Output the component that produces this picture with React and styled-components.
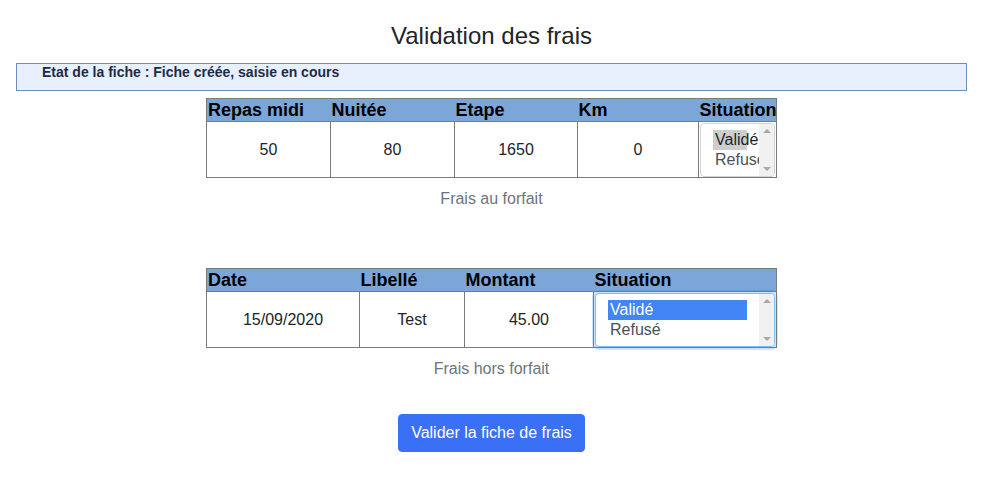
import React from 'react';
import styled, { createGlobalStyle, css } from 'styled-components';

const GlobalStyle = createGlobalStyle`
  body {
    margin: 0;
    background: #fff;
    color: #212529;
    font-family: "Liberation Sans", Arial, sans-serif;
    font-size: 16px;
  }
`;

const Page = styled.main`
  padding: 22px 16px 26px;
`;

const Title = styled.h1`
  margin: 0 0 12px;
  font-size: 24px;
  font-weight: 400;
  line-height: 1.2;
  text-align: center;
  color: #212529;
`;

const StatusBar = styled.div`
  height: 28px;
  box-sizing: border-box;
  padding: 0 25px;
  background: #e8f0fe;
  border: 1px solid #6c8ebf;
  font-size: 14px;
  font-weight: 700;
  line-height: 17px;
  color: #1e2b47;
`;

const Table = styled.table`
  margin: ${(props) => props.$top}px auto 0;
  border-collapse: collapse;
  border: 1px solid #7a7a7a;
  table-layout: fixed;
  width: 570px;
`;

const Caption = styled.caption`
  caption-side: bottom;
  padding-top: ${(props) => props.$gap}px;
  line-height: 24px;
  font-size: 16px;
  color: #6c757d;
  text-align: center;
`;

const HeadCell = styled.th`
  padding: 0 1px;
  height: 22px;
  line-height: 22px;
  background: #7da6d8;
  color: #000;
  font-size: 18px;
  font-weight: 700;
  text-align: left;
  white-space: nowrap;
  overflow: visible;
  border-bottom: 1px solid #7a7a7a;
`;

const Cell = styled.td`
  padding: 1px 1px 0;
  height: 54px;
  border: 1px solid #7a7a7a;
  text-align: center;
  vertical-align: middle;
  color: #212529;
`;

const ListBox = styled.div`
  display: flex;
  box-sizing: border-box;
  width: 100%;
  height: 54px;
  text-align: left;
  background: #fff;
  border: 1px solid ${(props) => (props.$focused ? '#80bdff' : '#ced4da')};
  border-radius: 4px;
  overflow: hidden;
  box-shadow: ${(props) =>
    props.$focused ? '0 0 0 3px rgba(0, 123, 255, 0.2)' : 'none'};
`;

const OptionList = styled.ul`
  flex: 1;
  min-width: 0;
  margin: 0;
  padding: 6px 12px;
  list-style: none;
  overflow: hidden;
`;

const Option = styled.li`
  padding: 0 2px;
  font-size: 16px;
  line-height: 20px;
  white-space: nowrap;
  color: #495057;

  ${(props) =>
    props.$selected &&
    css`
      background: ${props.$focused ? '#4285f4' : '#cecece'};
      color: ${props.$focused ? '#fff' : '#212529'};
    `}
`;

const ScrollTrack = styled.div`
  display: flex;
  flex-direction: column;
  justify-content: space-between;
  align-items: center;
  width: 15px;
  flex-shrink: 0;
  padding: 5px 0;
  box-sizing: border-box;
  background: #f1f1f1;
`;

const ScrollArrow = styled.span`
  width: 0;
  height: 0;
  border-left: 4px solid transparent;
  border-right: 4px solid transparent;
  ${(props) =>
    props.$dir === 'up'
      ? css`
          border-bottom: 4px solid #a8a8a8;
        `
      : css`
          border-top: 4px solid #a8a8a8;
        `}
`;

const ButtonRow = styled.div`
  display: flex;
  justify-content: center;
  margin-top: 33px;
`;

const PrimaryButton = styled.button`
  padding: 6px 12px;
  font-family: "Liberation Sans", Arial, sans-serif;
  font-size: 16px;
  line-height: 24px;
  color: #fff;
  background: #3a70f5;
  border: 1px solid #3a70f5;
  border-radius: 4px;
  cursor: pointer;
`;

const situations = ['Validé', 'Refusé'];

function Situation({ focused }) {
  return (
    <ListBox $focused={focused} role="listbox" aria-multiselectable="true">
      <OptionList>
        {situations.map((s, i) => (
          <Option key={s} $selected={i === 0} $focused={focused} role="option">
            {s}
          </Option>
        ))}
      </OptionList>
      <ScrollTrack>
        <ScrollArrow $dir="up" />
        <ScrollArrow $dir="down" />
      </ScrollTrack>
    </ListBox>
  );
}

const forfait = [
  { label: 'Repas midi', width: 124, value: '50' },
  { label: 'Nuitée', width: 124, value: '80' },
  { label: 'Etape', width: 123, value: '1650' },
  { label: 'Km', width: 121, value: '0' },
];

const horsForfait = [
  { label: 'Date', width: 153, value: '15/09/2020' },
  { label: 'Libellé', width: 105, value: 'Test' },
  { label: 'Montant', width: 129, value: '45.00' },
];

function FraisTable({ columns, situationWidth, caption, top, gap, focused }) {
  return (
    <Table $top={top}>
      <colgroup>
        {columns.map((c) => (
          <col key={c.label} style={{ width: c.width }} />
        ))}
        <col style={{ width: situationWidth }} />
      </colgroup>
      <thead>
        <tr>
          {columns.map((c) => (
            <HeadCell key={c.label}>{c.label}</HeadCell>
          ))}
          <HeadCell>Situation</HeadCell>
        </tr>
      </thead>
      <tbody>
        <tr>
          {columns.map((c) => (
            <Cell key={c.label}>{c.value}</Cell>
          ))}
          <Cell>
            <Situation focused={focused} />
          </Cell>
        </tr>
      </tbody>
      <Caption $gap={gap}>{caption}</Caption>
    </Table>
  );
}

export default function App() {
  return (
    <>
      <GlobalStyle />
      <Page>
        <Title>Validation des frais</Title>
        <StatusBar>Etat de la fiche : Fiche créée, saisie en cours</StatusBar>
        <FraisTable
          columns={forfait}
          situationWidth={78}
          caption="Frais au forfait"
          top={7}
          gap={9}
        />
        <FraisTable
          columns={horsForfait}
          situationWidth={183}
          caption="Frais hors forfait"
          top={57}
          gap={9}
          focused
        />
        <ButtonRow>
          <PrimaryButton type="button">Valider la fiche de frais</PrimaryButton>
        </ButtonRow>
      </Page>
    </>
  );
}
